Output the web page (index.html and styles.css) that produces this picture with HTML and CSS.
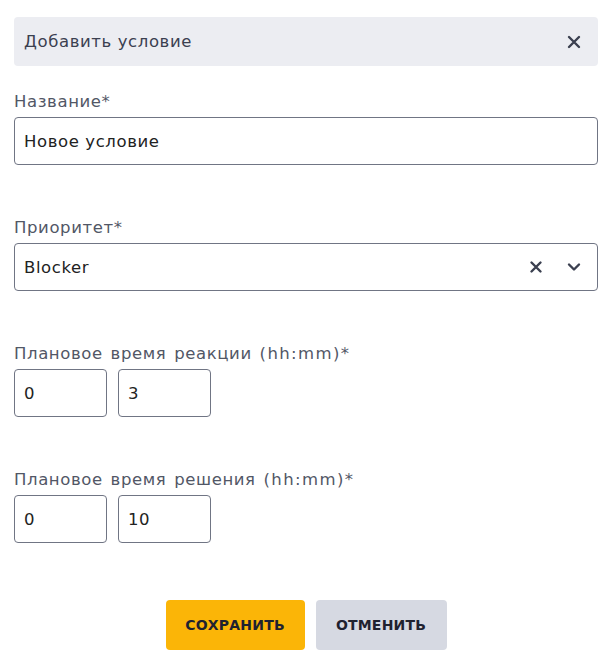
FILE: index.html
```html
<!DOCTYPE html>
<html lang="ru">
<head>
    <meta charset="UTF-8" />
    <title>Добавить условие</title>
    <link rel="stylesheet" href="styles.css">
</head>
<body>
    <div class="modal">
        <div class="modal-header">
            <span class="modal-title">Добавить условие</span>
            <button class="icon-btn close-btn" type="button">
                <svg width="14" height="14" viewBox="0 0 14 14"><path d="M2 2 L12 12 M12 2 L2 12" stroke="#3b4050" stroke-width="2.4" stroke-linecap="round"/></svg>
            </button>
        </div>

        <div class="field">
            <label class="label">Название*</label>
            <div class="input">Новое условие</div>
        </div>

        <div class="field">
            <label class="label">Приоритет*</label>
            <div class="input select">
                <span class="select-value">Blocker</span>
                <span class="select-icons">
                    <svg width="14" height="14" viewBox="0 0 14 14"><path d="M2.5 2.5 L11.5 11.5 M11.5 2.5 L2.5 11.5" stroke="#3b4050" stroke-width="2.4" stroke-linecap="round"/></svg>
                    <svg width="14" height="14" viewBox="0 0 14 14"><path d="M2 4.5 L7 9.5 L12 4.5" fill="none" stroke="#3b4050" stroke-width="2.4" stroke-linecap="round" stroke-linejoin="round"/></svg>
                </span>
            </div>
        </div>

        <div class="field">
            <label class="label">Плановое время реакции <span class="unit">(hh:mm)*</span></label>
            <div class="time-row">
                <div class="input small">0</div>
                <div class="input small">3</div>
            </div>
        </div>

        <div class="field">
            <label class="label">Плановое время решения <span class="unit">(hh:mm)*</span></label>
            <div class="time-row">
                <div class="input small">0</div>
                <div class="input small">10</div>
            </div>
        </div>

        <div class="actions">
            <button class="btn btn-save" type="button">Сохранить</button>
            <button class="btn btn-cancel" type="button">Отменить</button>
        </div>
    </div>
</body>
</html>
```

FILE: styles.css
```css
body {
    margin: 0;
    padding: 0;
    background: #FFFFFF;
    color: #222222;
    font-family: "DejaVu Sans", sans-serif;
    letter-spacing: 0.6px;
}

.modal {
    padding: 17px 13px 0 14px;
}

.modal-header {
    display: flex;
    align-items: center;
    justify-content: space-between;
    height: 49px;
    padding: 0 17px 0 10px;
    background: #ECEDF2;
    border-radius: 4px;
}

.modal-title {
    font-size: 16.5px;
    color: #3b4050;
}

.icon-btn {
    border: none;
    background: none;
    padding: 0;
    display: flex;
    cursor: pointer;
}

.field {
    display: flex;
    flex-direction: column;
    margin-top: 26px;
}

.field + .field {
    margin-top: 53px;
}

.label {
    font-size: 16.5px;
    line-height: 20px;
    color: #525766;
    word-spacing: 2px;
    margin-bottom: 5px;
}

.unit {
    letter-spacing: 1.4px;
}

.input {
    box-sizing: border-box;
    height: 48px;
    display: flex;
    align-items: center;
    padding: 0 9px;
    border: 1px solid #707584;
    border-radius: 4px;
    font-size: 16.5px;
    color: #222222;
}

.select {
    justify-content: space-between;
    padding-right: 16px;
}

.select-icons {
    display: flex;
    gap: 24px;
}

.time-row {
    display: flex;
    gap: 11px;
}

.input.small {
    width: 93px;
}

.actions {
    display: flex;
    justify-content: center;
    gap: 11px;
    margin-top: 57px;
}

.btn {
    height: 50px;
    padding: 0;
    border: none;
    border-radius: 4px;
    font-family: inherit;
    font-size: 14px;
    font-weight: bold;
    letter-spacing: 0.2px;
    text-transform: uppercase;
    color: #1f2230;
    cursor: pointer;
}

.btn-save {
    width: 139px;
    background: #FBB507;
}

.btn-cancel {
    width: 131px;
    background: #D6D9E2;
}
```
